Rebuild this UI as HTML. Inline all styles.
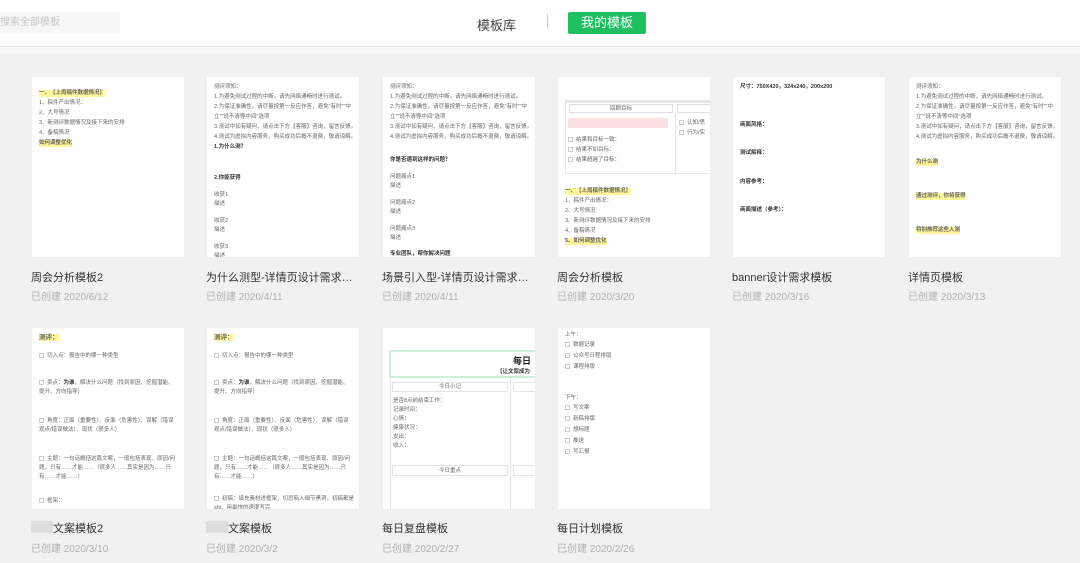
<!DOCTYPE html>
<html><head><meta charset="utf-8">
<style>
*{margin:0;padding:0;box-sizing:border-box}
body{width:1080px;height:563px;overflow:hidden;background:#f1f1f1;font-family:"Liberation Sans","Noto Sans CJK SC",sans-serif;position:relative}
.hdr{position:absolute;left:0;top:0;width:1080px;height:47px;background:#fff;border-bottom:1px solid #ececec}
.band{position:absolute;left:0;top:47px;width:1080px;height:6px;background:#f7f7f7}
.search{position:absolute;left:0;top:12px;width:120px;height:22px;background:#f7f7f7;font-size:10px;color:#c4c4c4;line-height:22px;padding-left:0}
.tab{position:absolute;left:477px;top:15px;font-size:13px;color:#444}
.sep{position:absolute;left:547px;top:14px;width:1px;height:15px;background:#ccc}
.btn{position:absolute;left:568px;top:12px;width:78px;height:22px;background:#1dbf60;border-radius:2px;color:#fff;font-size:13px;text-align:center;line-height:22px}
.card{position:absolute;width:154px;background:#fff;overflow:hidden;border:1px solid #efefef}
.card i{position:absolute;left:7px;font-style:normal;font-size:5.5px;color:#666;white-space:nowrap;line-height:7px}
.card b{font-weight:bold;color:#333}
.y{background:#fff59a;font-weight:bold;color:#333}
.t{position:absolute;font-size:11px;color:#333;white-space:nowrap;max-width:148px;overflow:hidden;text-overflow:ellipsis}
.d{position:absolute;font-size:10px;color:#b0b0b0;white-space:nowrap}
.cb{display:inline-block;width:5px;height:5px;border:1px solid #ccc;margin-right:3px;vertical-align:middle}
</style></head><body>
<div class="hdr"></div><div class="band"></div>
<div class="search">搜索全部模板</div>
<div class="tab">模板库</div><div class="sep"></div>
<div class="btn">我的模板</div>

<div class="card" style="left:31px;top:76px;height:182px">
<i style="top:13px" class="y">一、【上周稿件数据情况】</i>
<i style="top:23px">1、稿件产出情况：</i>
<i style="top:33px">2、大号情况</i>
<i style="top:43px">3、新测评数据情况及接下来的安排</i>
<i style="top:53px">4、备稿情况</i>
<i style="top:63px" class="y">如何调整优化</i>
</div>
<div class="t" style="left:31px;top:269px">周会分析模板2</div><div class="d" style="left:31px;top:288px">已创建 2020/6/12</div>

<div class="card" style="left:206px;top:76px;height:182px">
<i style="top:7px">测评须知：</i>
<i style="top:17px">1.为避免测试过程的中断，请先网络通畅时进行测试。</i>
<i style="top:27px">2.为保证准确性，请尽量按第一反应作答，避免"有时""中</i>
<i style="top:37px">立""说不清等中间"选项</i>
<i style="top:47px">3.测试中如有疑问，请点击下方【客服】咨询，留言反馈。</i>
<i style="top:57px">4.测试为虚拟内容服务，购买成功后概不退费，敬请谅解。</i>
<i style="top:67px"><b>1.为什么测？</b></i>
<i style="top:98px"><b>2.你能获得</b></i>
<i style="top:115px">收获1</i><i style="top:124px">描述</i>
<i style="top:141px">收获2</i><i style="top:150px">描述</i>
<i style="top:167px">收获3</i><i style="top:176px">描述</i>
</div>
<div class="t" style="left:206px;top:269px">为什么测型-详情页设计需求模板</div><div class="d" style="left:206px;top:288px">已创建 2020/4/11</div>

<div class="card" style="left:382px;top:76px;height:182px">
<i style="top:7px">测评须知：</i>
<i style="top:17px">1.为避免测试过程的中断，请先网络通畅时进行测试。</i>
<i style="top:27px">2.为保证准确性，请尽量按第一反应作答，避免"有时""中</i>
<i style="top:37px">立""说不清等中间"选项</i>
<i style="top:47px">3.测试中如有疑问，请点击下方【客服】咨询，留言反馈。</i>
<i style="top:57px">4.测试为虚拟内容服务，购买成功后概不退费，敬请谅解。</i>
<i style="top:80px"><b>你是否遇到这样的问题？</b></i>
<i style="top:97px">问题痛点1</i><i style="top:106px">描述</i>
<i style="top:123px">问题痛点2</i><i style="top:132px">描述</i>
<i style="top:149px">问题痛点3</i><i style="top:158px">描述</i>
<i style="top:174px"><b>专业团队，帮你解决问题</b></i>
</div>
<div class="t" style="left:382px;top:269px">场景引入型-详情页设计需求模板</div><div class="d" style="left:382px;top:288px">已创建 2020/4/11</div>

<div class="card" style="left:557px;top:76px;height:182px">
<div style="position:absolute;left:7px;top:23px;width:150px;height:74px;border:1px solid #e6e6e6;border-top:3px solid #e6e6e6"></div>
<div style="position:absolute;left:11px;top:27px;width:104px;height:9px;border:1px solid #e0e0e0;font-size:5.5px;color:#666;text-align:center;line-height:8px">回顾目标</div>
<div style="position:absolute;left:119px;top:27px;width:40px;height:9px;border:1px solid #e0e0e0"></div>
<div style="position:absolute;left:117px;top:37px;width:1px;height:60px;background:#e6e6e6"></div>
<div style="position:absolute;left:10px;top:41px;width:100px;height:10px;background:#fbe1e1"></div>
<i style="top:60px;left:10px"><span class="cb"></span>结果和目标一致：</i>
<i style="top:70px;left:10px"><span class="cb"></span>结果不如目标：</i>
<i style="top:80px;left:10px"><span class="cb"></span>结果超越了目标：</i>
<i style="top:43px;left:121px"><span class="cb"></span>认知/思</i>
<i style="top:53px;left:121px"><span class="cb"></span>行为/实</i>
<i style="top:111px" class="y">一、【上周稿件数据情况】</i>
<i style="top:121px">1、稿件产出情况：</i>
<i style="top:131px">2、大号情况</i>
<i style="top:141px">3、新测评数据情况及接下来的安排</i>
<i style="top:151px">4、备稿情况</i>
<i style="top:161px" class="y">5、如何调整优化</i>
</div>
<div class="t" style="left:557px;top:269px">周会分析模板</div><div class="d" style="left:557px;top:288px">已创建 2020/3/20</div>

<div class="card" style="left:732px;top:76px;height:182px">
<i style="top:7px"><b>尺寸：750X420，324x240，200x200</b></i>
<i style="top:45px"><b>画面风格：</b></i>
<i style="top:73px"><b>测试解释：</b></i>
<i style="top:102px"><b>内容参考：</b></i>
<i style="top:130px"><b>画面描述（参考）：</b></i>
</div>
<div class="t" style="left:732px;top:269px">banner设计需求模板</div><div class="d" style="left:732px;top:288px">已创建 2020/3/16</div>

<div class="card" style="left:908px;top:76px;height:182px">
<i style="top:7px">测评须知：</i>
<i style="top:17px">1.为避免测试过程的中断，请先网络通畅时进行测试。</i>
<i style="top:27px">2.为保证准确性，请尽量按第一反应作答，避免"有时""中</i>
<i style="top:37px">立""说不清等中间"选项</i>
<i style="top:47px">3.测试中如有疑问，请点击下方【客服】咨询，留言反馈。</i>
<i style="top:57px">4.测试为虚拟内容服务，购买成功后概不退费，敬请谅解。</i>
<i style="top:82px" class="y">为什么测</i>
<i style="top:116px" class="y">通过测评，你将获得</i>
<i style="top:150px" class="y">特别推荐这些人测</i>
</div>
<div class="t" style="left:908px;top:269px">详情页模板</div><div class="d" style="left:908px;top:288px">已创建 2020/3/13</div>

<div class="card" style="left:31px;top:327px;height:183px">
<i style="top:6px;font-size:6.5px" class="y">测评：</i>
<i style="top:25px"><span class="cb"></span>切入点：报告中的哪一种类型</i>
<i style="top:52px"><span class="cb"></span>卖点：<b>为谁</b>，解决什么问题（找到原因、挖掘潜能、</i>
<i style="top:61px">提升、方向指导）</i>
<i style="top:90px"><span class="cb"></span>角度：正面（重要性）、反面（危害性）、误解（错误</i>
<i style="top:99px">观点/错误做法）、现状（很多人）</i>
<i style="top:128px"><span class="cb"></span>主题：一句话概括这篇文案，一般包括表现、原因/问</i>
<i style="top:137px">题，只有……才能……（很多人……其实是因为……只</i>
<i style="top:146px">有……才能……）</i>
<i style="top:170px"><span class="cb"></span>框架：</i>
</div>
<div style="position:absolute;left:31px;top:521px;width:22px;height:12px;background:#ddd"></div>
<div class="t" style="left:53px;top:520px">文案模板2</div><div class="d" style="left:31px;top:540px">已创建 2020/3/10</div>

<div class="card" style="left:206px;top:327px;height:183px">
<i style="top:6px;font-size:6.5px" class="y">测评：</i>
<i style="top:25px"><span class="cb"></span>切入点：报告中的哪一种类型</i>
<i style="top:52px"><span class="cb"></span>卖点：<b>为谁</b>，解决什么问题（找到原因、挖掘潜能、</i>
<i style="top:61px">提升、方向指导）</i>
<i style="top:90px"><span class="cb"></span>角度：正面（重要性）、反面（危害性）、误解（错误</i>
<i style="top:99px">观点/错误做法）、现状（很多人）</i>
<i style="top:128px"><span class="cb"></span>主题：一句话概括这篇文案，一般包括表现、原因/问</i>
<i style="top:137px">题，只有……才能……（很多人……其实是因为……只</i>
<i style="top:146px">有……才能……）</i>
<i style="top:168px"><span class="cb"></span>初稿：填充素材进框架，切忌陷入细节黑洞，初稿都是</i>
<i style="top:177px">shi，用最快的速度写完</i>
</div>
<div style="position:absolute;left:206px;top:521px;width:22px;height:12px;background:#ddd"></div>
<div class="t" style="left:228px;top:520px">文案模板</div><div class="d" style="left:206px;top:540px">已创建 2020/3/2</div>

<div class="card" style="left:382px;top:327px;height:183px">
<div style="position:absolute;left:6px;top:22px;width:150px;height:28px;border:2px solid #cdeed8;border-right:none"></div>
<div style="position:absolute;left:130px;top:26px;font-size:9px;font-weight:bold;color:#222">每日</div>
<div style="position:absolute;left:114px;top:39px;font-size:5.5px;font-weight:bold;color:#333;white-space:nowrap">【让文案成为</div>
<div style="position:absolute;left:7px;top:51px;width:1px;height:140px;background:#e3e3e3"></div>
<div style="position:absolute;left:9px;top:54px;width:116px;height:10px;border:1px solid #e3e3e3;font-size:5.5px;color:#666;text-align:center;line-height:9px">今日小记</div>
<div style="position:absolute;left:127px;top:51px;width:1px;height:140px;background:#e3e3e3"></div>
<div style="position:absolute;left:130px;top:54px;width:30px;height:10px;border:1px solid #e3e3e3"></div>
<i style="top:70px;left:10px">是否8点前结束工作：</i>
<i style="top:79px;left:10px">记录时间：</i>
<i style="top:88px;left:10px">心情：</i>
<i style="top:97px;left:10px">健康状况：</i>
<i style="top:106px;left:10px">支出：</i>
<i style="top:115px;left:10px">收入：</i>
<div style="position:absolute;left:9px;top:137px;width:116px;height:11px;border:1px solid #e3e3e3;font-size:5.5px;color:#666;text-align:center;line-height:10px">今日重点</div>
<div style="position:absolute;left:130px;top:137px;width:30px;height:11px;border:1px solid #e3e3e3"></div>
</div>
<div class="t" style="left:382px;top:520px">每日复盘模板</div><div class="d" style="left:382px;top:540px">已创建 2020/2/27</div>

<div class="card" style="left:557px;top:327px;height:183px">
<i style="top:4px">上午：</i>
<i style="top:14px"><span class="cb"></span>数据记录</i>
<i style="top:25px"><span class="cb"></span>公众号日程排版</i>
<i style="top:36px"><span class="cb"></span>课程排版</i>
<i style="top:67px">下午：</i>
<i style="top:77px"><span class="cb"></span>写文案</i>
<i style="top:88px"><span class="cb"></span>新稿排版</i>
<i style="top:99px"><span class="cb"></span>想标题</i>
<i style="top:110px"><span class="cb"></span>推送</i>
<i style="top:121px"><span class="cb"></span>写汇报</i>
</div>
<div class="t" style="left:557px;top:520px">每日计划模板</div><div class="d" style="left:557px;top:540px">已创建 2020/2/26</div>
</body></html>
